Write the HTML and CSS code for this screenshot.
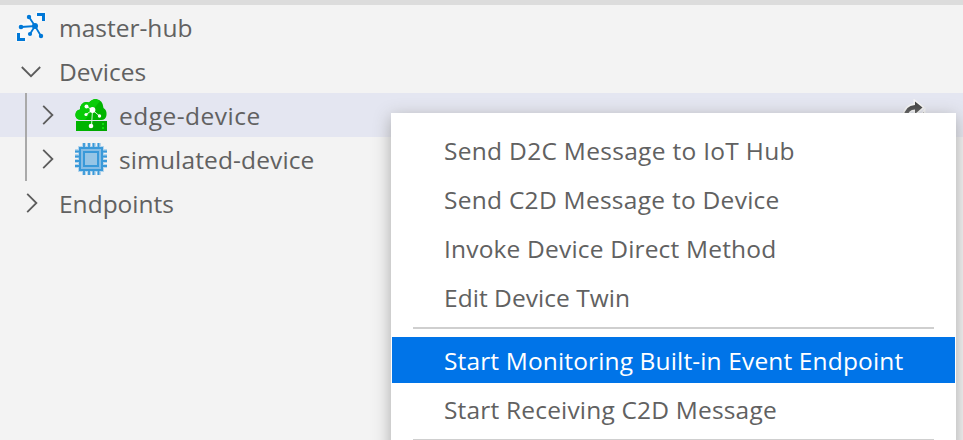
FILE: index.html
```html
<!DOCTYPE html>
<html lang="en">
<head>
<meta charset="utf-8">
<title>Devices</title>
<link rel="stylesheet" href="styles.css">
</head>
<body>
<main class="panel">
  <div class="tree">
    <div class="row root">
      <svg class="hub-icon" width="32" height="32" viewBox="0 0 32 32">
        <path d="M1 19h3l-1-5 3-2 6-1V3h4l5 2V0h10v10h-5l-3 5 3 6 1 6-4 1-4-4-4 1-3 1v5H1z" fill="#f8f9fa"/>
        <path d="M22 2h8v8h-3V5h-5zM2 22h3v5h5v3H2z" fill="#0078d7"/>
        <path d="M14 6l6 9 6 10M6 16l14-1-5 8" fill="none" stroke="#0078d7" stroke-width="1.8"/>
        <g fill="#0078d7"><circle cx="14" cy="6" r="2.2"/><circle cx="6" cy="16" r="2.3"/><circle cx="20" cy="15" r="3"/><circle cx="15" cy="23" r="2.1"/><circle cx="26" cy="25" r="2.2"/></g>
      </svg>
      <span class="label">master-hub</span>
    </div>
    <div class="row">
      <svg class="twisty" width="22" height="22" viewBox="0 0 22 22"><path d="M1.800 7l9.200 9.200 9.200-9.200"/></svg>
      <span class="label">Devices</span>
    </div>
    <div class="children">
      <div class="row child selected">
        <svg class="twisty" width="22" height="22" viewBox="0 0 22 22"><path d="M7.200 1.800l9.200 9.200-9.200 9.200"/></svg>
        <svg class="icon" width="32" height="32" viewBox="0 0 32 32">
          <path d="M7 21C2 21 0 18 0.500 15Q1 11 5 10.500Q5 4 11 3Q13 3 14 3.500Q17 0 21 0Q28 1 28.500 9Q32 11 31.500 16Q31 21 26 21z" fill="#00b400"/>
          <path d="M7 21C2 21 0 18 0.500 15Q1 11 5 10.500Q5 4 11 3Q13 3 14 3.500Q17 0 21 0L25 2 10 21z" fill="#08cc08"/>
          <path d="M1 22h31v10H1z" fill="#00a800"/>
          <path d="M1 22h18l-5 10H1z" fill="#00b400"/>
          <path d="M11.500 7.500l6 3.500 7 6M11 15.500l6.500-4.500-1 16" fill="none" stroke="#d8f5d8" stroke-width="1"/>
          <g fill="#fff"><circle cx="11.500" cy="7.500" r="2"/><circle cx="17.500" cy="11" r="2.900"/><circle cx="11" cy="15.500" r="1.600"/><circle cx="24.500" cy="17" r="1.700"/><circle cx="16" cy="27" r="2.300"/></g>
          <path d="M27 24h2v2h-2zM27 28h2v2h-2z" fill="#0be00b"/>
        </svg>
        <span class="label t-edge">edge-device</span>
        <svg class="refresh" width="28" height="32" viewBox="0 0 28 32">
          <path d="M3.500 18Q5 6.500 15 6V2.500l7.500 6L15 15v-4.500Q8 10.500 7.500 18zM20.500 18l3.500-5v5z" fill="#424242" stroke="#f6f6f6" stroke-width="3" paint-order="stroke"/>
        </svg>
      </div>
      <div class="row child">
        <svg class="twisty" width="22" height="22" viewBox="0 0 22 22"><path d="M7.200 1.800l9.200 9.200-9.200 9.200"/></svg>
        <svg class="icon" width="32" height="32" viewBox="0 0 32 32">
          <path d="M7 0h4v32H7zM12 0h4v32h-4zM17 0h4v32h-4zM22 0h4v32h-4zM0 6h32v4H0zM0 11h32v4H0zM0 16h32v4H0zM0 21h32v4H0zM3 3h26v26H3z" fill="#b5d5ec"/>
          <path d="M9 0v32M14 0v32M18.500 0v32M23.500 0v32M0 8.500h32M0 13.500h32M0 18h32M0 23h32" stroke="#3999d9" stroke-width="1.8"/>
          <path d="M5 5h22v22H5z" fill="#86bce4" stroke="#3999d9" stroke-width="2"/>
          <path d="M9 9h14v14H9z" fill="#96c5e6" stroke="#3999d9" stroke-width="2"/>
        </svg>
        <span class="label t-sim">simulated-device</span>
      </div>
    </div>
    <div class="row">
      <svg class="twisty" width="22" height="22" viewBox="0 0 22 22"><path d="M7.200 1.800l9.200 9.200-9.200 9.200"/></svg>
      <span class="label">Endpoints</span>
    </div>
  </div>
  <div class="menu">
    <div class="item m1">Send D2C Message to IoT Hub</div>
    <div class="item m2">Send C2D Message to Device</div>
    <div class="item m3">Invoke Device Direct Method</div>
    <div class="item m4">Edit Device Twin</div>
    <div class="separator"></div>
    <div class="item active m5">Start Monitoring Built-in Event Endpoint</div>
    <div class="item m6">Start Receiving C2D Message</div>
    <div class="separator"></div>
  </div>
</main>
</body>
</html>
```

FILE: styles.css
```css
* { box-sizing: border-box; }
body { margin: 0; overflow: hidden; }
.panel {
  position: relative;
  height: 440px;
  overflow: hidden;
  border-top: 5px solid #dcdcdc;
  background: #f3f3f3;
  color: #616161;
  font: 24.5px/44px "Open Sans", "Noto Sans", sans-serif;
}
.row { display: flex; align-items: center; height: 44px; padding-left: 20px; }
.row svg { flex: none; }
.root { padding-left: 15px; }
.hub-icon { margin-right: 12px; }
.twisty { margin-right: 17px; fill: none; stroke: #5c5c5c; stroke-width: 1.8; }
.label { padding-top: 2px; white-space: nowrap; }
.t-edge { letter-spacing: 0.48px; }
.t-sim { letter-spacing: 0.13px; }
.children { position: relative; }
.children::before {
  content: "";
  position: absolute;
  left: 25px;
  top: 0;
  width: 2px;
  height: 88px;
  background: #a9a9a9;
}
.child { padding-left: 36px; }
.child .icon { margin-right: 12px; }
.selected { background: #e4e6f1; }
.refresh { margin-left: auto; margin-right: 35px; }
.menu {
  position: absolute;
  left: 391px;
  top: 108px;
  display: flex;
  flex-direction: column;
  gap: 3px;
  width: 565px;
  height: 360px;
  padding: 14px 1px;
  background: #fff;
  box-shadow: 0 4px 16px #a8a8a8;
}
.item {
  flex: none;
  height: 46px;
  padding-left: 52px;
  line-height: 47px;
  white-space: nowrap;
}
.m1 { letter-spacing: 0.3px; }
.m2 { letter-spacing: 0.27px; }
.m3 { letter-spacing: 0.18px; }
.m4 { letter-spacing: 0.04px; }
.m5 { letter-spacing: 0.14px; }
.m6 { letter-spacing: 0.18px; }
.active { background: #0074e8; color: #fff; }
.separator { flex: none; height: 2px; margin: 4px 21px 5px; background: #cfcfcf; }
```
